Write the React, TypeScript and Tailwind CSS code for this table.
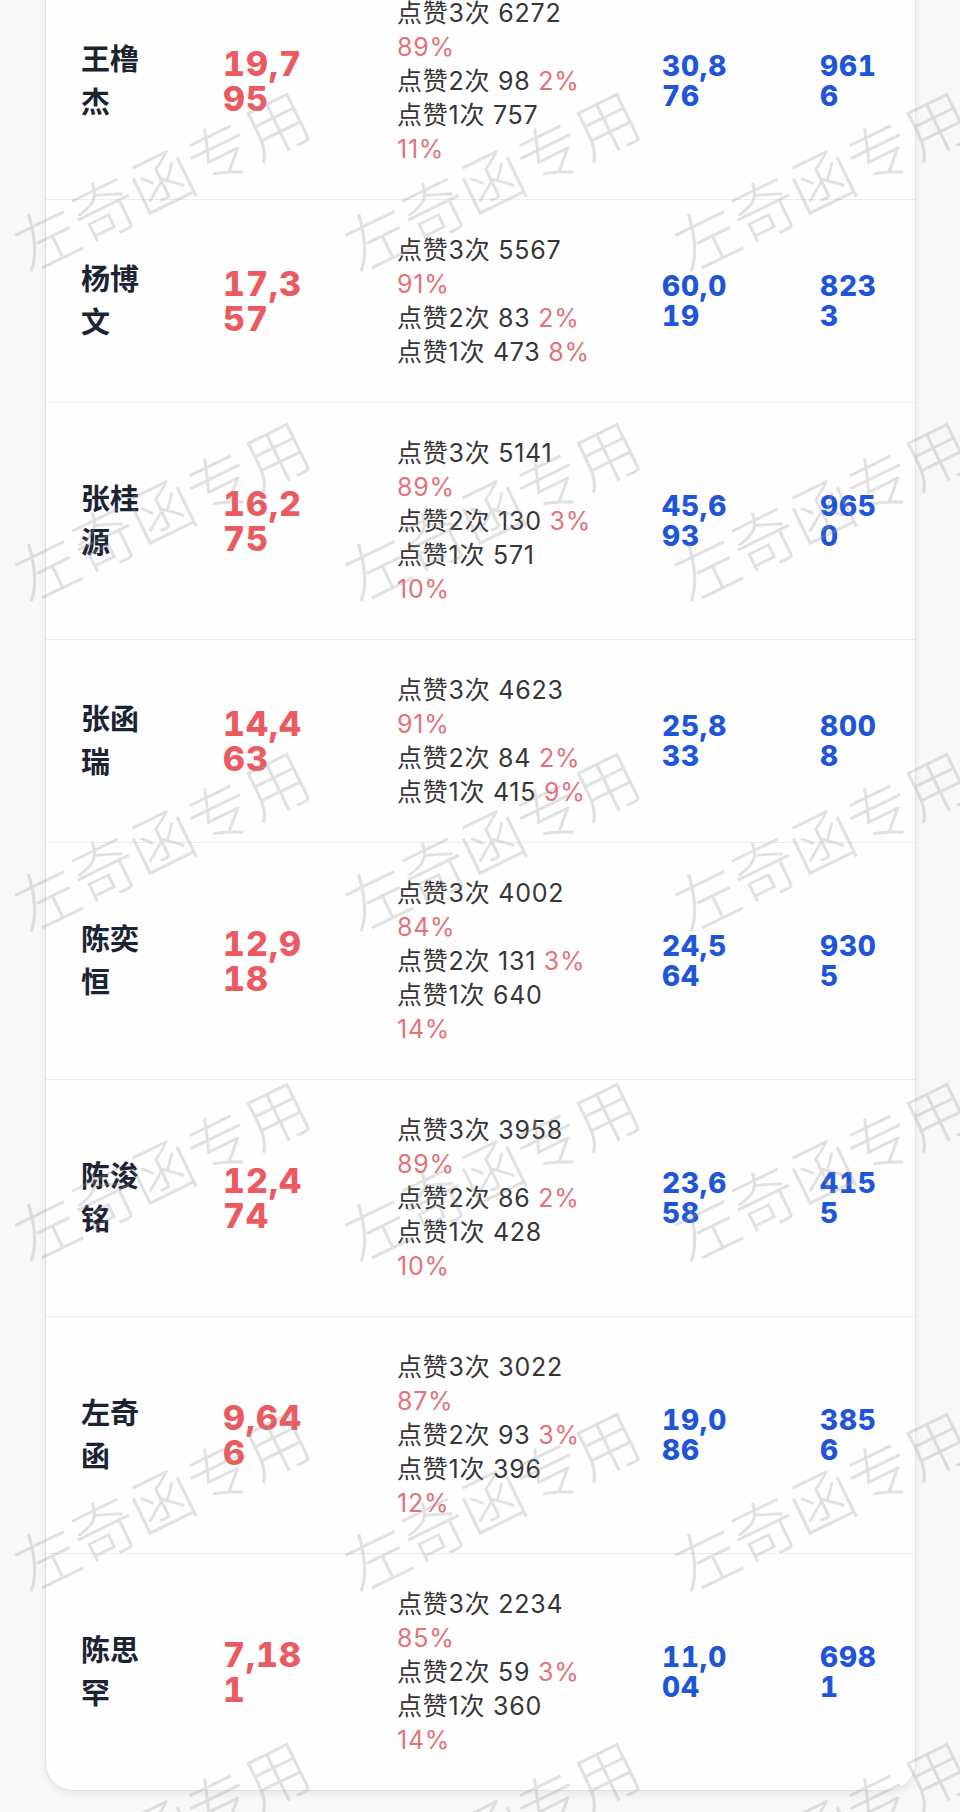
import React from "react";

type Line = { label: string; count: string; pct: string; wrap: boolean };
type Row = { name: string; total: string; lines: Line[]; blue: string; last: string };

const L = (label: string, count: string, pct: string, wrap: boolean): Line => ({ label, count, pct, wrap });

const rows: Row[] = [
  { name: "王橹杰", total: "19,795", lines: [L("点赞3次", "6272", "89%", true), L("点赞2次", "98", "2%", false), L("点赞1次", "757", "11%", true)], blue: "30,876", last: "9616" },
  { name: "杨博文", total: "17,357", lines: [L("点赞3次", "5567", "91%", true), L("点赞2次", "83", "2%", false), L("点赞1次", "473", "8%", false)], blue: "60,019", last: "8233" },
  { name: "张桂源", total: "16,275", lines: [L("点赞3次", "5141", "89%", true), L("点赞2次", "130", "3%", false), L("点赞1次", "571", "10%", true)], blue: "45,693", last: "9650" },
  { name: "张函瑞", total: "14,463", lines: [L("点赞3次", "4623", "91%", true), L("点赞2次", "84", "2%", false), L("点赞1次", "415", "9%", false)], blue: "25,833", last: "8008" },
  { name: "陈奕恒", total: "12,918", lines: [L("点赞3次", "4002", "84%", true), L("点赞2次", "131", "3%", false), L("点赞1次", "640", "14%", true)], blue: "24,564", last: "9305" },
  { name: "陈浚铭", total: "12,474", lines: [L("点赞3次", "3958", "89%", true), L("点赞2次", "86", "2%", false), L("点赞1次", "428", "10%", true)], blue: "23,658", last: "4155" },
  { name: "左奇函", total: "9,646", lines: [L("点赞3次", "3022", "87%", true), L("点赞2次", "93", "3%", false), L("点赞1次", "396", "12%", true)], blue: "19,086", last: "3856" },
  { name: "陈思罕", total: "7,181", lines: [L("点赞3次", "2234", "85%", true), L("点赞2次", "59", "3%", false), L("点赞1次", "360", "14%", true)], blue: "11,004", last: "6981" },
];

function TableRow({ r }: { r: Row }) {
  return (
    <div className="grid grid-cols-[142px_174px_265px_158px_1fr] items-center pl-[35px] py-[33px] border-b border-[#ececec] last:border-b-0">
      <div className="w-[62px] text-[29px] leading-[43px] font-bold text-[#1c2433]">{r.name}</div>
      <div className="w-[88px] break-all text-[34px] leading-[35px] font-extrabold tabular-nums tracking-[0.03em] text-[#ea5a60]">{r.total}</div>
      <div className="text-[25px] leading-[34px] tracking-[0.03em] text-[#363636]">
        {r.lines.map((ln, i) => (
          <React.Fragment key={i}>
            <div>
              {ln.label} {ln.count}
              {!ln.wrap && <span className="text-[#e2737a]"> {ln.pct}</span>}
            </div>
            {ln.wrap && <div className="text-[#e2737a]">{ln.pct}</div>}
          </React.Fragment>
        ))}
      </div>
      <div className="w-[74px] break-all text-[28px] leading-[30px] font-extrabold tabular-nums tracking-[0.03em] text-[#1f56d8]">{r.blue}</div>
      <div className="w-[64px] break-all text-[28px] leading-[30px] font-extrabold tabular-nums tracking-[0.03em] text-[#1f56d8]">{r.last}</div>
    </div>
  );
}

export default function App() {
  const marks = Array.from({ length: 21 }, (_, i) => i);
  return (
    <div className="relative h-[1812px] w-[960px] overflow-hidden bg-[#f8f8f8] font-[Inter,'Noto_Sans_CJK_SC',sans-serif]">
      <div className="ml-[45px] -mt-[38px] w-[871px] rounded-b-[28px] border border-[#e2e2e2] bg-[#fefefe] shadow-[0_3px_8px_rgba(0,0,0,0.07)]">
        {rows.map((r) => (
          <TableRow key={r.name} r={r} />
        ))}
      </div>
      <div className="pointer-events-none absolute left-[-5px] top-[-317px] grid grid-cols-[330px_330px_330px] auto-rows-[330px]">
        {marks.map((i) => (
          <div key={i} className="flex items-center justify-center">
            <span className="-rotate-[26deg] whitespace-nowrap text-[64px] font-light leading-none text-[rgba(150,150,150,0.28)] font-['Noto_Sans_CJK_SC',sans-serif]">
              左奇函专用
            </span>
          </div>
        ))}
      </div>
    </div>
  );
}
